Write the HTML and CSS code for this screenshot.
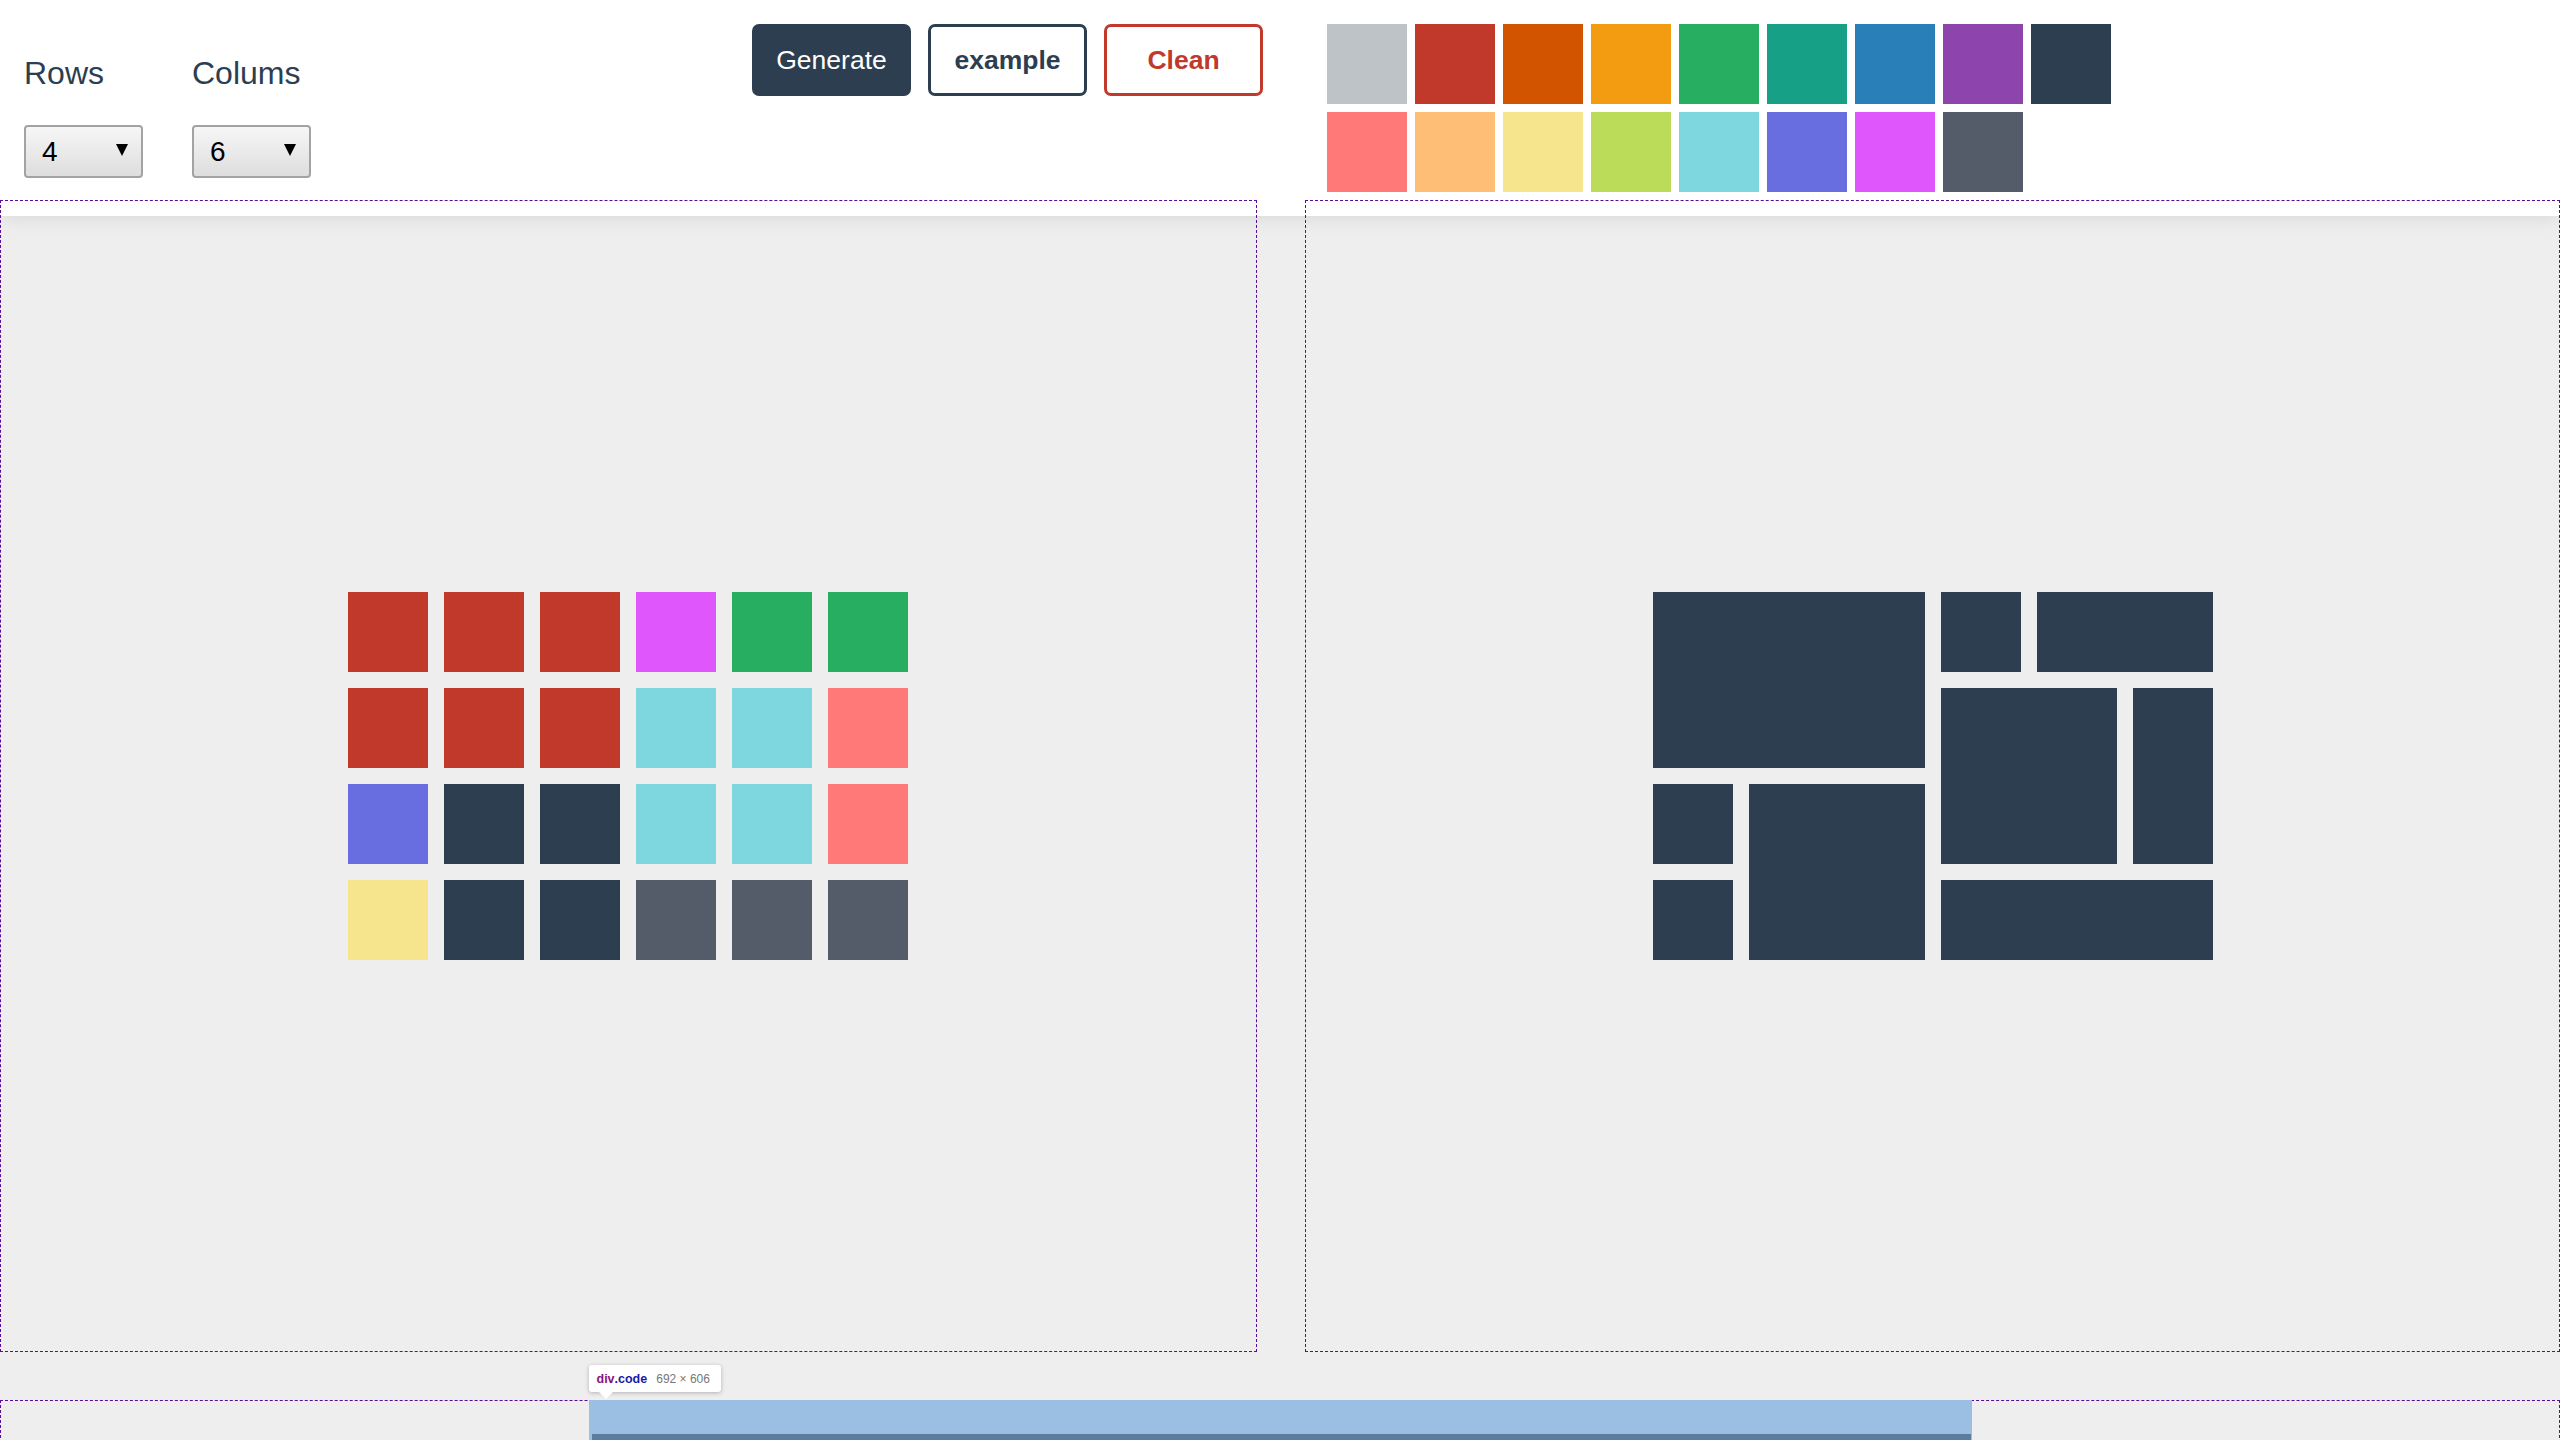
FILE: index.html
```html
<!DOCTYPE html>
<html lang="en">
<head>
<meta charset="utf-8">
<title>Grid generator</title>
<link rel="stylesheet" href="styles.css">
</head>
<body>
<header class="topbar">
  <div class="fields">
    <div class="field">
      <label class="field-label">Rows</label>
      <div class="select"><span class="select-value">4</span><svg class="select-arrow" width="12" height="12" viewBox="0 0 12 12"><polygon points="0,0 12,0 6,12" fill="#000"/></svg></div>
    </div>
    <div class="field">
      <label class="field-label">Colums</label>
      <div class="select"><span class="select-value">6</span><svg class="select-arrow" width="12" height="12" viewBox="0 0 12 12"><polygon points="0,0 12,0 6,12" fill="#000"/></svg></div>
    </div>
  </div>
  <div class="actions">
    <button class="btn btn-primary">Generate</button>
    <button class="btn btn-outline">example</button>
    <button class="btn btn-danger">Clean</button>
  </div>
  <div class="palette">
    <span class="swatch c-silver"></span>
    <span class="swatch c-red"></span>
    <span class="swatch c-pumpkin"></span>
    <span class="swatch c-orange"></span>
    <span class="swatch c-green"></span>
    <span class="swatch c-sea"></span>
    <span class="swatch c-blue"></span>
    <span class="swatch c-purple"></span>
    <span class="swatch c-navy"></span>
    <span class="swatch c-pink"></span>
    <span class="swatch c-peach"></span>
    <span class="swatch c-yellow"></span>
    <span class="swatch c-lime"></span>
    <span class="swatch c-cyan"></span>
    <span class="swatch c-indigo"></span>
    <span class="swatch c-magenta"></span>
    <span class="swatch c-slate"></span>
  </div>
</header>

<main class="layout">
  <section class="cell cell-a">
    <div class="paint-grid">
      <span class="tile c-red"></span><span class="tile c-red"></span><span class="tile c-red"></span><span class="tile c-magenta"></span><span class="tile c-green"></span><span class="tile c-green"></span>
      <span class="tile c-red"></span><span class="tile c-red"></span><span class="tile c-red"></span><span class="tile c-cyan"></span><span class="tile c-cyan"></span><span class="tile c-pink"></span>
      <span class="tile c-indigo"></span><span class="tile c-navy"></span><span class="tile c-navy"></span><span class="tile c-cyan"></span><span class="tile c-cyan"></span><span class="tile c-pink"></span>
      <span class="tile c-yellow"></span><span class="tile c-navy"></span><span class="tile c-navy"></span><span class="tile c-slate"></span><span class="tile c-slate"></span><span class="tile c-slate"></span>
    </div>
  </section>
  <section class="cell cell-b">
    <div class="result-grid">
      <span class="block b1"></span>
      <span class="block b2"></span>
      <span class="block b3"></span>
      <span class="block b4"></span>
      <span class="block b5"></span>
      <span class="block b6"></span>
      <span class="block b7"></span>
      <span class="block b8"></span>
      <span class="block b9"></span>
    </div>
  </section>
  <div class="cell cell-c"></div>
  <div class="cell cell-d"></div>
  <div class="code">
    <div class="inspect-tip"><span class="tip-tag">div</span><span class="tip-class">.code</span><span class="tip-size">692 × 606</span></div>
    <div class="code-body"></div>
  </div>
</main>
</body>
</html>
```

FILE: styles.css
```css
* { box-sizing: border-box; }
html, body { margin: 0; padding: 0; }
body {
  background: #eeeeee;
  font-family: "Liberation Sans", Arial, sans-serif;
  color: #2c3e50;
  width: 2560px;
}

/* header */
.topbar {
  height: 216px;
  background: #ffffff;
  box-shadow: 0 2px 18px rgba(0, 0, 0, 0.09);
  display: flex;
  align-items: flex-start;
  padding: 24px 0 0 24px;
}
.fields {
  display: flex;
  gap: 49px;
  margin-top: 31px;
}
.field {
  display: flex;
  flex-direction: column;
  width: 119px;
}
.field-label {
  font-size: 32px;
  line-height: 36px;
  color: #2c3e50;
  white-space: nowrap;
}
.select {
  margin-top: 34px;
  height: 53px;
  width: 119px;
  border: 2px solid #a3a3a3;
  border-radius: 4px;
  background: linear-gradient(#f6f6f6, #dedede);
  display: flex;
  align-items: center;
  justify-content: space-between;
  padding: 0 13px 0 16px;
}
.select-value {
  font-size: 28px;
  color: #000;
  line-height: 1;
}
.select-arrow { display: block; margin-top: -3px; }

.actions {
  display: flex;
  gap: 17px;
  margin-left: 441px;
}
.btn {
  width: 159px;
  height: 72px;
  border-radius: 7px;
  border: 3px solid #2c3e50;
  font-family: "Liberation Sans", Arial, sans-serif;
  font-size: 26.5px;
  padding: 0;
  cursor: pointer;
}
.btn-primary { background: #2c3e50; color: #ffffff; }
.btn-outline { background: #ffffff; color: #2c3e50; font-weight: bold; }
.btn-danger { background: #ffffff; color: #c0392b; border-color: #c0392b; font-weight: bold; }

.palette {
  margin-left: 64px;
  display: grid;
  grid-template-columns: repeat(9, 80px);
  grid-auto-rows: 80px;
  gap: 8px;
}
.swatch { display: block; }

/* colours */
.c-silver { background: #bdc3c7; }
.c-red { background: #c0392b; }
.c-pumpkin { background: #d35400; }
.c-orange { background: #f39c12; }
.c-green { background: #27ae60; }
.c-sea { background: #16a085; }
.c-blue { background: #2980b9; }
.c-purple { background: #8e44ad; }
.c-navy { background: #2c3e50; }
.c-pink { background: #ff7979; }
.c-peach { background: #ffbe76; }
.c-yellow { background: #f6e58d; }
.c-lime { background: #badc58; }
.c-cyan { background: #7ed6df; }
.c-indigo { background: #686de0; }
.c-magenta { background: #e056fd; }
.c-slate { background: #535c68; }

/* main grid */
.layout {
  margin-top: -16px;
  display: grid;
  grid-template-columns: 1257px 1255px;
  grid-template-rows: 1152px 1212px;
  gap: 48px;
}
.cell {
  border: 1px dashed #5a0a9c;
  display: flex;
  align-items: center;
  justify-content: center;
}
.cell-a { grid-column: 1; grid-row: 1; padding-right: 1px; }
.cell-b { grid-column: 2; grid-row: 1; }
.cell-c { grid-column: 1; grid-row: 2; }
.cell-d { grid-column: 2; grid-row: 2; }

.paint-grid, .result-grid {
  display: grid;
  grid-template-columns: repeat(6, 80px);
  grid-template-rows: repeat(4, 80px);
  gap: 16px;
}
.tile, .block { display: block; }
.block { background: #2c3e50; }
.b1 { grid-column: 1 / 4; grid-row: 1 / 3; }
.b2 { grid-column: 4 / 5; grid-row: 1 / 2; }
.b3 { grid-column: 5 / 7; grid-row: 1 / 2; }
.b4 { grid-column: 4 / 6; grid-row: 2 / 4; }
.b5 { grid-column: 6 / 7; grid-row: 2 / 4; }
.b6 { grid-column: 1 / 2; grid-row: 3 / 4; }
.b7 { grid-column: 2 / 4; grid-row: 3 / 5; }
.b8 { grid-column: 1 / 2; grid-row: 4 / 5; }
.b9 { grid-column: 4 / 7; grid-row: 4 / 5; }

/* inspected element */
.code {
  grid-column: 1 / 3;
  grid-row: 2;
  justify-self: center;
  width: 1383px;
  position: relative;
  background: #9bbfe3;
  padding: 34px 1px 0 3px;
}
.code-body {
  height: 1100px;
  background: #5d7d9f;
}
.inspect-tip {
  position: absolute;
  left: 0;
  top: -35px;
  height: 27px;
  width: 132px;
  background: #ffffff;
  border-radius: 3px;
  box-shadow: 0 1px 4px rgba(0, 0, 0, 0.25);
  display: flex;
  align-items: center;
  padding-left: 8px;
  font-family: "Liberation Sans", Arial, sans-serif;
  white-space: nowrap;
}
.inspect-tip::after {
  content: "";
  position: absolute;
  left: 10px;
  bottom: -7px;
  border-left: 7px solid transparent;
  border-right: 7px solid transparent;
  border-top: 7px solid #ffffff;
}
.tip-tag { color: #881280; font-weight: bold; font-size: 12.5px; }
.tip-class { color: #1a1aa6; font-weight: bold; font-size: 12.5px; }
.tip-size { color: #777777; font-size: 12px; margin-left: 9px; }
```
